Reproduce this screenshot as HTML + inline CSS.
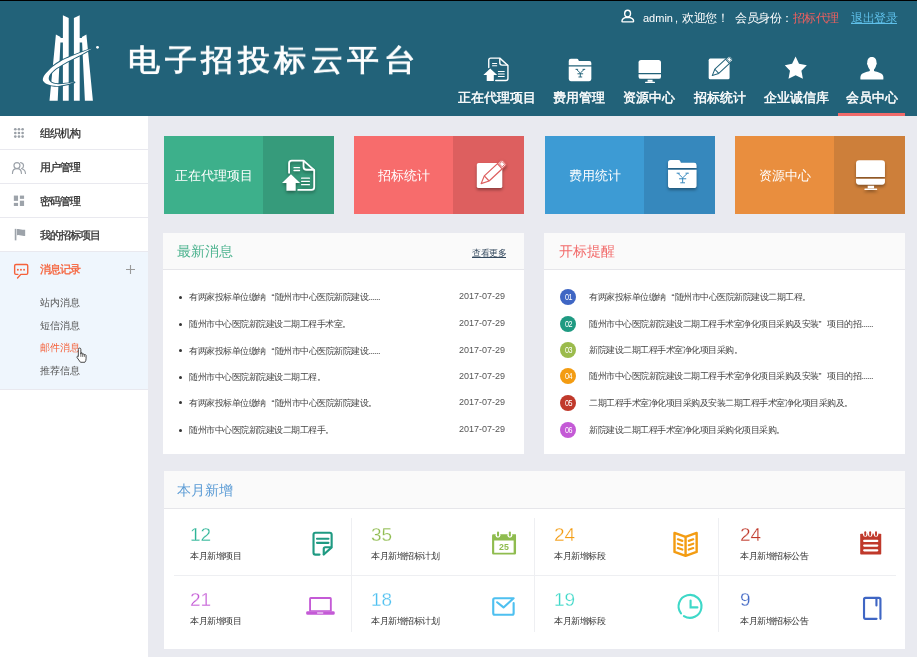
<!DOCTYPE html>
<html><head><meta charset="utf-8">
<style>
*{margin:0;padding:0;box-sizing:border-box}
html,body{width:917px;height:657px;overflow:hidden;background:#e9eaf0;font-family:"Liberation Sans",sans-serif;position:relative}
.a{will-change:transform}
.a{position:absolute}
svg{position:absolute;overflow:visible}
#hdr{left:0;top:0;width:917px;height:116px;background:#226279}
#hdr .topline{left:0;top:0;width:917px;height:1px;background:#000}
.title{left:128px;top:40px;color:#fff;font-size:32px;font-weight:400;letter-spacing:4.5px;-webkit-text-stroke:0.9px #fff;transform:scaleY(0.94);transform-origin:0 19.5px;white-space:nowrap;line-height:40px}
.top{top:8.5px;font-size:12px;letter-spacing:-0.5px;color:#fff;white-space:nowrap;line-height:18px}
.nav{top:88.5px;font-size:13px;color:#fff;font-weight:normal;-webkit-text-stroke:0.45px #fff;white-space:nowrap;line-height:17px;text-align:center;width:100px}
#side{left:0;top:116px;width:148px;height:541px;background:#fff}
.srow{left:0;width:148px;height:34px;border-bottom:1px solid #e9e9ef}
.stxt{left:40px;font-size:11px;color:#333;line-height:14px;white-space:nowrap;letter-spacing:-1px;-webkit-text-stroke-width:0.3px}
.sub{left:40px;font-size:10px;color:#555;line-height:14px;white-space:nowrap}
.card{top:136px;height:78px;width:170px}
.card .cd{position:absolute;top:0;right:0;width:71px;height:78px}
.card .ct{position:absolute;left:0;top:1px;width:99px;height:78px;line-height:78px;text-align:center;color:#fff;font-size:13px;white-space:nowrap}
.panel{background:#fff}
.ph{position:absolute;left:0;top:0;width:100%;height:37px;background:#fafafa;border-bottom:1px solid #e6e6ea}
.ptitle{position:absolute;left:13px;top:9px;font-size:14px;line-height:18px;white-space:nowrap}
.li{left:25px;font-size:9px;letter-spacing:-0.5px;color:#444;white-space:nowrap;line-height:12px}
.dt{font-size:9px;color:#555;white-space:nowrap;line-height:12px}
.bul{width:3px;height:3px;background:#333;border-radius:50%}
.num{width:16px;height:16px;border-radius:50%;color:#fff;font-size:9px;line-height:16px;text-align:center;letter-spacing:-0.6px}
.num span{display:inline-block;transform:scaleX(.8)}
.sn{font-size:19px;line-height:20px;white-space:nowrap;-webkit-text-stroke:0.3px #fff;paint-order:fill stroke}
.csh{filter:drop-shadow(0 2px 1.5px rgba(0,0,0,.35))}
.q{display:inline-block;width:9px;text-align:right;letter-spacing:0}
.q2{display:inline-block;width:8.5px;text-align:left;letter-spacing:0}
.sl{font-size:9px;letter-spacing:-0.5px;color:#333;line-height:12px;white-space:nowrap}
</style></head><body>
<div id="hdr" class="a">
  <div class="a topline"></div>
  <!-- logo -->
  <svg width="917" height="116" style="left:0;top:0">
    <g fill="#fff">
      <polygon points="55.9,34.4 60.5,36.9 60.5,38.1 62.9,38.1 62.9,15.2 68.7,17.9 68.7,100.8 62.9,100.8 62.9,42.4 60.4,42.4 57.7,100.8 49.5,100.8"/>
      <polygon points="79.7,15.2 73.9,17.9 73.9,100.8 79.7,100.8 79.7,42.4 82.1,42.4 84.9,100.8 92.9,100.8 86.4,34.4 81.9,36.9 81.9,38.1 79.7,38.1"/>
      <circle cx="97.5" cy="47.3" r="1.4"/>
      <path d="M795.6,56.6 L799,63.7 L806.8,65.2 L801.4,70.8 L802.9,78.8 L795.6,75.2 L788.5,78.8 L790,70.8 L784.8,65.2 L792.1,63.7 Z"/>
      <path d="M871.8,56.9 C868.5,56.9 867.2,59.5 867.3,62.5 C866.8,63.2 867,64.5 867.6,65 C868,67 869,68.6 869.8,69.6 L869.8,71 C866,72.2 862,72.8 860.8,75.5 C860.3,76.5 860.3,78.5 860.5,79.6 L883.3,79.6 C883.5,78.5 883.5,76.5 883,75.5 C881.8,72.8 877.8,72.2 874,71 L874,69.6 C874.8,68.6 875.8,67 876.2,65 C876.8,64.5 877,63.2 876.5,62.5 C876.6,59.5 875.3,56.9 871.8,56.9 Z"/>
    </g>
    <path d="M91.5,48.8 C89.77,49.42 84.55,51.20 81.10,52.50 C77.65,53.80 74.23,55.12 70.80,56.60 C67.37,58.08 63.58,59.68 60.50,61.40 C57.42,63.12 54.68,64.95 52.30,66.90 C49.92,68.85 47.73,71.27 46.20,73.10 C44.67,74.93 43.57,76.53 43.10,77.90 C42.63,79.27 42.78,80.28 43.40,81.30 C44.02,82.32 45.43,83.32 46.80,84.00 C48.17,84.68 49.73,85.08 51.60,85.40 C53.47,85.72 55.60,86.03 58.00,85.90 C60.40,85.77 63.25,85.20 66.00,84.60 C68.75,84.00 73.08,82.68 74.50,82.30 C73.08,82.52 68.75,83.28 66.00,83.60 C63.25,83.92 60.28,84.30 58.00,84.20 C55.72,84.10 53.77,83.67 52.30,83.00 C50.83,82.33 49.77,81.20 49.20,80.20 C48.63,79.20 48.68,78.07 48.90,77.00 C49.12,75.93 49.47,75.10 50.50,73.80 C51.53,72.50 53.08,70.77 55.10,69.20 C57.12,67.63 59.75,66.07 62.60,64.40 C65.45,62.73 68.88,60.93 72.20,59.20 C75.52,57.47 79.28,55.73 82.50,54.00 C85.72,52.27 90.00,49.67 91.50,48.80 Z" fill="#fff" stroke="#226279" stroke-width="1.8" stroke-linejoin="round" paint-order="stroke"/>
  </svg>
  <div class="a title">电子招投标云平台</div>
  <!-- top bar -->
  <svg style="left:615px;top:4px" width="24" height="24" viewBox="0 0 657 657"><g fill="none" stroke="#fff" stroke-width="38"><ellipse cx="345" cy="262" rx="80" ry="92"/><path d="M190,475 Q190,375 345,362 Q510,375 510,465 Q510,490 490,490 H210 Q190,490 190,470 Z"/></g></svg>
  <div class="a top" style="left:642.5px;font-size:11px;letter-spacing:0">admin</div>
  <div class="a top" style="left:675px;font-size:11px">,</div>
  <div class="a top" style="left:681.5px">欢迎您！</div>
  <div class="a top" style="left:734.5px">会员身份：<span style="color:#f05f5f">招标代理</span></div>
  <div class="a top" style="left:850.5px;color:#5fc0ea;text-decoration:underline">退出登录</div>
  <!-- nav -->
  <div class="a nav" style="left:447px">正在代理项目</div>
  <div class="a nav" style="left:529px">费用管理</div>
  <div class="a nav" style="left:599px">资源中心</div>
  <div class="a nav" style="left:670px">招标统计</div>
  <div class="a nav" style="left:746px">企业诚信库</div>
  <div class="a nav" style="left:822px">会员中心</div>
  <div class="a" style="left:838px;top:113px;width:67px;height:3px;background:#f06a6a"></div>
  <svg style="left:477.8px;top:50.3px" width="38.2" height="38.2" viewBox="0 0 657 657"><use href="#i-doc"/></svg>
  <svg style="left:559.7px;top:51.1px" width="39.6" height="39.6" viewBox="0 0 657 657"><use href="#i-folder"/><path d="M275,306 L337,366 L400,306 M258,305 H300 M375,305 H418 M337,366 V430 M290,378 H384 M306,431 H368" fill="none" stroke="#226279" stroke-width="16"/></svg>
  <svg style="left:630.4px;top:51.5px" width="38.8" height="38.8" viewBox="0 0 657 657"><use href="#i-monitor"/></svg>
  <svg style="left:699.3px;top:48.1px" width="41" height="41" viewBox="0 0 657 657"><use href="#i-pencil" style="--pc:#226279"/></svg>
</div>
<svg width="0" height="0" style="position:absolute">
  <defs>
    <symbol id="i-doc" viewBox="0 0 657 657">
      <g fill="none" stroke="#fff" stroke-width="24" stroke-linecap="round" stroke-linejoin="round">
        <path d="M185,300 V175 Q185,140 220,140 H375 L515,265 V490 Q515,525 480,525 H305"/>
        <path d="M375,148 V220 Q375,260 415,260 H508"/>
        <path d="M250,232 H322 M250,270 H322" stroke-width="18"/>
        <path d="M350,370 H452 M350,412 H452 M350,455 H452" stroke-width="18"/>
      </g>
      <path fill="#fff" d="M210,318 L92,432 H150 V535 H272 V432 H330 Z"/>
    </symbol>
    <symbol id="i-folder" viewBox="0 0 657 657">
      <path fill="#fff" d="M145,236 V165 Q145,130 180,130 H282 Q300,130 306,148 L314,168 H488 Q520,168 520,200 V236 Z"/>
      <path fill="#fff" d="M145,258 H520 V465 Q520,500 485,500 H180 Q145,500 145,465 Z"/>
    </symbol>
    <symbol id="i-monitor" viewBox="0 0 657 657">
      <path fill="#fff" d="M145,355 V178 Q145,135 188,135 H482 Q525,135 525,178 V355 Z"/>
      <path fill="#fff" d="M145,377 H525 V418 Q525,455 488,455 H182 Q145,455 145,418 Z"/>
      <rect fill="#fff" x="298" y="470" width="84" height="34"/>
      <rect fill="#fff" x="255" y="505" width="168" height="22" rx="8"/>
    </symbol>
    <symbol id="i-pencil" viewBox="0 0 657 657">
      <rect fill="#fff" x="155" y="170" width="335" height="330" rx="25"/>
      <g transform="translate(212,442) rotate(-43)" fill="#fff" stroke="var(--pc)" stroke-width="16" stroke-linejoin="round">
        <path d="M0,0 L100,-46 H395 Q418,-46 418,-23 V23 Q418,46 395,46 H100 Z"/>
        <path d="M100,-46 V46 M335,-46 V46" fill="none"/>
        <rect x="352" y="-27" width="48" height="54" rx="6" stroke-width="12"/>
      </g>
    </symbol>
  </defs>
</svg>
<div id="side" class="a">
  <div class="a srow" style="top:0"></div>
  <div class="a srow" style="top:34px"></div>
  <div class="a srow" style="top:68px"></div>
  <div class="a srow" style="top:102px"></div>
  <div class="a" style="left:0;top:136px;width:148px;height:138px;background:#eff6fd;border-bottom:1px solid #e9e9ef"></div>
  <div class="a stxt" style="top:10px">组织机构</div>
  <div class="a stxt" style="top:44px">用户管理</div>
  <div class="a stxt" style="top:78px">密码管理</div>
  <div class="a stxt" style="top:112px">我的招标项目</div>
  <div class="a stxt" style="top:146px;color:#f5613a">消息记录</div>
  <svg style="left:126px;top:149px" width="9" height="9" viewBox="0 0 9 9"><path d="M0,4.5 H9 M4.5,0 V9" stroke="#9a9a9a" stroke-width="1.1"/></svg>
  <div class="a sub" style="top:180px">站内消息</div>
  <div class="a sub" style="top:203px">短信消息</div>
  <div class="a sub" style="top:225px;color:#f5613a">邮件消息</div>
  <div class="a sub" style="top:248px">推荐信息</div>
  <svg style="left:8px;top:6px" width="24" height="24" viewBox="0 0 657 657"><g fill="#9aa0a7"><circle cx="200" cy="200" r="36"/><circle cx="300" cy="200" r="36"/><circle cx="400" cy="200" r="36"/><circle cx="200" cy="300" r="36"/><circle cx="300" cy="300" r="36"/><circle cx="400" cy="300" r="36"/><circle cx="200" cy="400" r="36"/><circle cx="300" cy="400" r="36"/><circle cx="400" cy="400" r="36"/></g></svg>
  <svg style="left:8px;top:40px" width="24" height="24" viewBox="0 0 657 657"><g fill="none" stroke="#9da3aa" stroke-width="32" stroke-linecap="round"><circle cx="245" cy="262" r="82"/><path d="M122,478 Q122,345 245,345 Q368,345 368,478"/><path d="M345,183 Q425,195 425,265 Q425,325 375,342"/><path d="M380,348 Q478,380 478,478"/></g></svg>
  <svg style="left:8px;top:73px" width="24" height="24" viewBox="0 0 657 657"><g fill="#9da3aa"><rect x="160" y="180" width="115" height="145"/><rect x="325" y="180" width="115" height="90"/><rect x="160" y="380" width="115" height="85"/><rect x="325" y="320" width="115" height="145"/></g></svg>
  <svg style="left:8px;top:107px" width="24" height="24" viewBox="0 0 657 657"><g fill="#9da3aa"><rect x="185" y="160" width="45" height="315"/><path d="M245,165 Q300,155 360,175 Q415,192 470,185 V355 Q415,362 360,345 Q300,325 245,335 Z"/></g></svg>
  <svg style="left:8px;top:143px" width="24" height="24" viewBox="0 0 657 657"><g fill="none" stroke="#f5613a" stroke-width="38" stroke-linejoin="round" stroke-linecap="round"><path d="M272,420 H218 Q182,420 182,384 V188 Q182,152 218,152 H504 Q540,152 540,188 V384 Q540,420 504,420 H350 L262,518"/></g><g fill="#f5613a"><circle cx="270" cy="295" r="26"/><circle cx="355" cy="295" r="26"/><circle cx="440" cy="295" r="26"/></g></svg>
</div>

<!-- cards -->
<div class="a card" style="left:164px;background:#3db08b"><div class="cd" style="background:#369b7b"></div><div class="ct">正在代理项目</div></div>
<div class="a card" style="left:354px;background:#f76c6c"><div class="cd" style="background:#dd5f5f"></div><div class="ct">招标统计</div></div>
<div class="a card" style="left:545px;background:#3d9bd4"><div class="cd" style="background:#3688bd"></div><div class="ct">费用统计</div></div>
<div class="a card" style="left:735px;background:#e98e3e"><div class="cd" style="background:#cd7f3a"></div><div class="ct">资源中心</div></div>
<svg class="csh" style="left:275px;top:150px" width="50" height="50" viewBox="0 0 657 657"><use href="#i-doc"/></svg>
<svg class="csh" style="left:465px;top:150px" width="50" height="50" viewBox="0 0 657 657"><use href="#i-pencil" style="--pc:#dd5f5f"/></svg>
<svg class="csh" style="left:657px;top:150px" width="50" height="50" viewBox="0 0 657 657"><use href="#i-folder"/><path d="M275,306 L337,366 L400,306 M258,305 H300 M375,305 H418 M337,366 V430 M290,378 H384 M306,431 H368" fill="none" stroke="#3688bd" stroke-width="13"/></svg>
<svg class="csh" style="left:845px;top:150px" width="50" height="50" viewBox="0 0 657 657"><use href="#i-monitor"/></svg>

<!-- panel 1 -->
<div class="a panel" style="left:163px;top:233px;width:361px;height:221px">
  <div class="ph"></div>
  <div class="ptitle" style="color:#4db38f;left:14px">最新消息</div>
  <div class="a" style="left:309px;top:13.5px;font-size:9px;letter-spacing:-0.5px;color:#34495e;text-decoration:underline;line-height:12px">查看更多</div>
</div>
<!-- panel 2 -->
<div class="a panel" style="left:544px;top:233px;width:361px;height:221px">
  <div class="ph"></div>
  <div class="ptitle" style="color:#f26b6b;left:15px">开标提醒</div>
</div>
<!-- panel 3 -->
<div class="a panel" style="left:164px;top:471px;width:741px;height:178px">
  <div class="ph" style="height:38px"></div>
  <div class="ptitle" style="color:#5a9bd5;top:10px">本月新增</div>
</div>
<div class="a bul" style="left:178.5px;top:295.5px"></div><div class="a li" style="left:189px;top:291px">有两家投标单位缴纳<span class="q">“</span>随州市中心医院新院建设......</div><div class="a dt" style="left:459px;top:290px">2017-07-29</div>
<div class="a bul" style="left:178.5px;top:322.5px"></div><div class="a li" style="left:189px;top:318px">随州市中心医院新院建设二期工程手术室。</div><div class="a dt" style="left:459px;top:317px">2017-07-29</div>
<div class="a bul" style="left:178.5px;top:349.0px"></div><div class="a li" style="left:189px;top:344.5px">有两家投标单位缴纳<span class="q">“</span>随州市中心医院新院建设......</div><div class="a dt" style="left:459px;top:343.5px">2017-07-29</div>
<div class="a bul" style="left:178.5px;top:375.5px"></div><div class="a li" style="left:189px;top:371px">随州市中心医院新院建设二期工程。</div><div class="a dt" style="left:459px;top:370px">2017-07-29</div>
<div class="a bul" style="left:178.5px;top:401.0px"></div><div class="a li" style="left:189px;top:396.5px">有两家投标单位缴纳<span class="q">“</span>随州市中心医院新院建设。</div><div class="a dt" style="left:459px;top:395.5px">2017-07-29</div>
<div class="a bul" style="left:178.5px;top:428.5px"></div><div class="a li" style="left:189px;top:424px">随州市中心医院新院建设二期工程手。</div><div class="a dt" style="left:459px;top:423px">2017-07-29</div>
<div class="a num" style="left:560px;top:289px;background:#3f66c4"><span>01</span></div><div class="a li" style="left:589px;top:291px">有两家投标单位缴纳<span class="q">“</span>随州市中心医院新院建设二期工程。</div>
<div class="a num" style="left:560px;top:315.7px;background:#1f9a82"><span>02</span></div><div class="a li" style="left:589px;top:317.7px">随州市中心医院新院建设二期工程手术室净化项目采购及安装<span class="q2">”</span>项目的招......</div>
<div class="a num" style="left:560px;top:342.4px;background:#9bbb4c"><span>03</span></div><div class="a li" style="left:589px;top:344.4px">新院建设二期工程手术室净化项目采购。</div>
<div class="a num" style="left:560px;top:368.3px;background:#f39c12"><span>04</span></div><div class="a li" style="left:589px;top:370.3px">随州市中心医院新院建设二期工程手术室净化项目采购及安装<span class="q2">”</span>项目的招......</div>
<div class="a num" style="left:560px;top:395px;background:#c0392b"><span>05</span></div><div class="a li" style="left:589px;top:397px">二期工程手术室净化项目采购及安装二期工程手术室净化项目采购及。</div>
<div class="a num" style="left:560px;top:421.7px;background:#c45ad6"><span>06</span></div><div class="a li" style="left:589px;top:423.7px">新院建设二期工程手术室净化项目采购化项目采购。</div>
<div class="a sn" style="left:190px;top:525px;color:#2db597">12</div><div class="a sl" style="left:190px;top:550px">本月新增项目</div>
<div class="a sn" style="left:371px;top:525px;color:#8fbc4f">35</div><div class="a sl" style="left:371px;top:550px">本月新增招标计划</div>
<div class="a sn" style="left:554px;top:525px;color:#f39c12">24</div><div class="a sl" style="left:554px;top:550px">本月新增标段</div>
<div class="a sn" style="left:740px;top:525px;color:#c0392b">24</div><div class="a sl" style="left:740px;top:550px">本月新增招标公告</div>
<div class="a sn" style="left:190px;top:590px;color:#c45ad6">21</div><div class="a sl" style="left:190px;top:615px">本月新增项目</div>
<div class="a sn" style="left:371px;top:590px;color:#4ec0f0">18</div><div class="a sl" style="left:371px;top:615px">本月新增招标计划</div>
<div class="a sn" style="left:554px;top:590px;color:#3ed8c8">19</div><div class="a sl" style="left:554px;top:615px">本月新增标段</div>
<div class="a sn" style="left:740px;top:590px;color:#3f66c4">9</div><div class="a sl" style="left:740px;top:615px">本月新增招标公告</div>
<div class="a" style="left:174px;top:575px;width:722px;height:1px;background:#eeeff2"></div>
<div class="a" style="left:351px;top:518px;width:1px;height:114px;background:#eeeff2"></div>
<div class="a" style="left:534px;top:518px;width:1px;height:114px;background:#eeeff2"></div>
<div class="a" style="left:718px;top:518px;width:1px;height:114px;background:#eeeff2"></div>
<!-- stat icons -->
<svg style="left:305px;top:525px" width="35" height="35" viewBox="0 0 657 657"><g fill="none" stroke="#1f9a82" stroke-width="40" stroke-linecap="round" stroke-linejoin="round"><path d="M272,555 H195 Q160,555 160,520 V180 Q160,145 195,145 H465 Q500,145 500,180 V420 L352,553"/><path d="M352,550 V445 Q352,418 380,418 H492"/><path d="M225,258 H440 M225,335 H440"/></g></svg>
<svg style="left:487px;top:525px" width="35" height="35" viewBox="0 0 657 657"><path fill="#8fbc4f" d="M120,175 H540 Q545,175 545,200 V530 Q545,555 520,555 H120 Q95,555 95,530 V200 Q95,175 120,175 Z M135,290 V520 H500 V290 Z"/><g fill="#fff"><rect x="160" y="140" width="92" height="100" rx="46"/><rect x="383" y="140" width="92" height="100" rx="46"/></g><g fill="#8fbc4f"><rect x="188" y="122" width="38" height="95" rx="19"/><rect x="410" y="122" width="38" height="95" rx="19"/></g><text x="318" y="465" text-anchor="middle" font-family="Liberation Sans" font-weight="bold" font-size="165" fill="#8fbc4f">25</text></svg>
<svg style="left:668px;top:525px" width="35" height="35" viewBox="0 0 657 657"><g fill="none" stroke="#f39c12" stroke-width="45" stroke-linecap="round" stroke-linejoin="round"><path d="M122,150 L330,225 L538,150 V505 L330,578 L122,505 Z M330,225 V578"/><path d="M185,268 L270,298 M185,350 L270,380 M185,432 L270,462 M390,298 L475,268 M390,380 L475,350 M390,462 L475,432" stroke-width="40"/></g></svg>
<svg style="left:853px;top:525px" width="35" height="35" viewBox="0 0 657 657"><path fill="#c0392b" d="M150,165 H515 Q530,165 530,180 V540 Q530,555 515,555 H150 Q135,555 135,540 V180 Q135,165 150,165 Z"/><g fill="#fff"><rect x="188" y="130" width="85" height="90" rx="42"/><rect x="280" y="130" width="85" height="90" rx="42"/><rect x="390" y="130" width="85" height="90" rx="42"/></g><g fill="#c0392b"><rect x="212" y="118" width="36" height="90" rx="18"/><rect x="304" y="118" width="36" height="90" rx="18"/><rect x="414" y="118" width="36" height="90" rx="18"/></g><g stroke="#fff" stroke-width="42" stroke-linecap="round"><path d="M210,300 H455 M210,387 H455 M210,475 H455"/></g></svg>
<svg style="left:303px;top:588px" width="35" height="35" viewBox="0 0 657 657"><g fill="#c45ad6"><path d="M145,170 H510 Q540,170 540,200 V440 H115 V200 Q115,170 145,170 Z M150,208 V418 H505 V208 Z"/><path d="M85,435 H570 Q595,435 595,460 V478 Q595,502 570,502 H85 Q60,502 60,478 V460 Q60,435 85,435 Z"/></g><rect x="265" y="458" width="115" height="20" fill="#fff" rx="4"/></svg>
<svg style="left:487px;top:588px" width="35" height="35" viewBox="0 0 657 657"><g fill="none" stroke="#4ec0f0" stroke-width="40" stroke-linecap="round" stroke-linejoin="round"><path d="M500,285 V475 Q500,503 472,503 H145 Q117,503 117,475 V220 Q117,192 145,192 H500 L310,365 L190,268"/></g></svg>
<svg style="left:673px;top:589px" width="35" height="35" viewBox="0 0 657 657"><g fill="none" stroke="#3ed8c8" stroke-width="40" stroke-linecap="round"><path d="M150,458 A215,215 0 1 1 205,508"/><path d="M330,215 V345 H458"/></g></svg>
<svg style="left:853px;top:589px" width="35" height="35" viewBox="0 0 657 657"><g fill="none" stroke="#3f66c4" stroke-width="40" stroke-linecap="round" stroke-linejoin="round"><path d="M442,560 H235 Q207,560 207,532 V195 Q207,167 235,167 H487 Q515,167 515,195 V560"/><path d="M440,185 V310"/></g></svg>
<!-- cursor -->
<svg style="left:75.5px;top:346.5px" width="12.6" height="16.2" viewBox="0 0 14 18"><path d="M4,1.2 Q5.4,1.2 5.4,2.6 V8 L5.6,6.6 Q7,6 7.4,7.2 V8 Q8.8,7.2 9.3,8.6 Q10.8,8 11.2,9.4 V13 Q11.2,15.5 9.8,17 H5 L1.2,11.8 Q0.6,10.4 2,10.2 L2.6,10.6 V2.6 Q2.6,1.2 4,1.2 Z" fill="#fff" stroke="#222" stroke-width="0.9" stroke-linejoin="round"/><path d="M5.4,8 V11 M7.4,8 V11 M9.3,8.6 V11" stroke="#222" stroke-width="0.7"/></svg>
</body></html>
